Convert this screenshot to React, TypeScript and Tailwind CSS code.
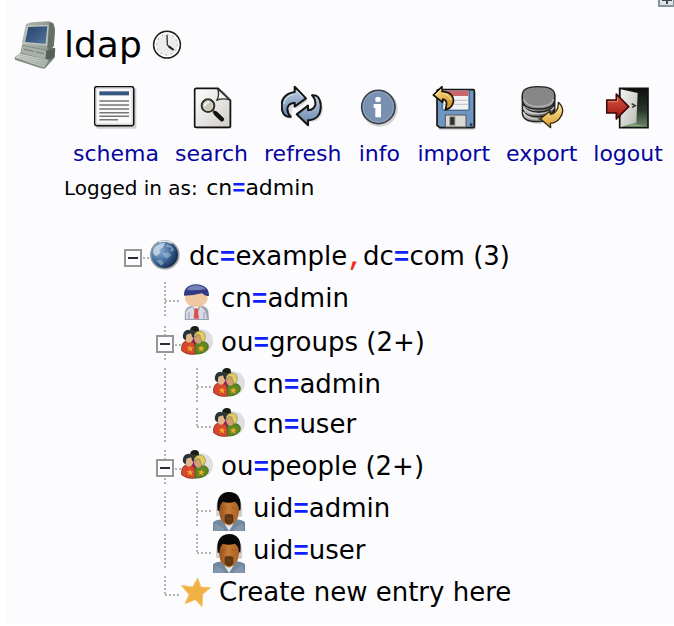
import React, { useState } from "react";

type IconProps = { className?: string };

function ComputerIcon() {
  return (
    <svg className="h-12 w-[42px] shrink-0" viewBox="39 66 126 144" aria-hidden="true">
      <defs>
        <linearGradient id="pcScreen" x1="0" y1="0" x2="1" y2="1">
          <stop offset="0" stopColor="#2a466a" />
          <stop offset="0.5" stopColor="#3a5a84" />
          <stop offset="1" stopColor="#58789e" />
        </linearGradient>
        <linearGradient id="pcBody" x1="0" y1="0" x2="1" y2="0">
          <stop offset="0" stopColor="#b4bab4" />
          <stop offset="1" stopColor="#8b938d" />
        </linearGradient>
        <linearGradient id="pcKeys" x1="0" y1="0" x2="1" y2="0">
          <stop offset="0" stopColor="#dcdfdb" />
          <stop offset="1" stopColor="#a9afa9" />
        </linearGradient>
      </defs>
      <path d="M64 136 L144 146 L163 148 L161 176 L131 209 L118 207 L42 182 L41 175 L58 163 Z" fill="#7c847e" />
      <path d="M75 76 L90 70 L144 67 L157 72 L162 90 L159 140 L150 154 L138 153 L66 138 L63 130 Z" fill="url(#pcBody)" />
      <path d="M145 70 L157 74 L162 92 L158 140 L149 153 L139 150 Z" fill="#666e68" />
      <path d="M79 80 L143 78 L138 140 L68 132 Z" fill="#c3c8c3" />
      <path d="M82 84 L139 82 L134 135 L72 129 Z" fill="url(#pcScreen)" />
      <path d="M64 140 L136 155 L133 179 L60 162 Z" fill="#a9b0aa" />
      <path d="M136 155 L162 146 L160 174 L133 190 Z" fill="#565e58" />
      <path d="M68 150 L98 157 M104 158 L129 164" stroke="#727a74" strokeWidth="3" />
      <path d="M42 176 L58 164 L144 182 L129 206 Z" fill="url(#pcKeys)" />
      <path d="M57 169 L137 187 M52 173 L133 194 M48 177 L129 199" stroke="#9fa6a0" strokeWidth="2" />
    </svg>
  );
}

function ClockIcon() {
  return (
    <svg className="h-[31px] w-[30px]" viewBox="456 87 90 93" aria-hidden="true">
      <circle cx="501" cy="131" r="40" fill="#eeeeee" stroke="#202020" strokeWidth="5" />
      <circle cx="501" cy="131" r="35" fill="#ececec" stroke="#ffffff" strokeWidth="4" />
      <circle cx="501" cy="131" r="31" fill="none" stroke="#aaaaaa" strokeWidth="4" strokeDasharray="3 13.23" />
      <path d="M501 102 L502 132 L520 146" fill="none" stroke="#333333" strokeWidth="4" />
      <path d="M506 136 L521 147" stroke="#222222" strokeWidth="6" />
    </svg>
  );
}

function SchemaIcon({ className }: IconProps) {
  return (
    <svg className={className} viewBox="102 30 132 132" aria-hidden="true">
      <rect x="108" y="36" width="121" height="122" rx="6" fill="#000000" opacity="0.18" />
      <rect x="104" y="32" width="117" height="117" rx="7" fill="#fafafa" stroke="#111111" strokeWidth="5" />
      <rect x="109" y="37" width="107" height="107" fill="none" stroke="#dddddd" strokeWidth="4" />
      <rect x="118" y="46" width="89" height="12" fill="#355681" />
      <path d="M118 75H207 M118 87H207 M118 99H207 M118 110H207 M118 121H207 M118 131H174" stroke="#777777" strokeWidth="4.5" />
    </svg>
  );
}

function SearchIcon({ className }: IconProps) {
  return (
    <svg className={className} viewBox="386 30 132 132" aria-hidden="true">
      <defs>
        <linearGradient id="paper" x1="0" y1="0" x2="1" y2="1">
          <stop offset="0" stopColor="#ffffff" />
          <stop offset="1" stopColor="#d0cdc9" />
        </linearGradient>
      </defs>
      <path d="M406 44 H486 L512 74 V158 H406 Z" fill="#000000" opacity="0.13" />
      <path d="M405 37 H470 L507 73 V149 Q507 154 502 154 H405 Q400 154 400 149 V42 Q400 37 405 37 Z" fill="url(#paper)" stroke="#111111" strokeWidth="5" />
      <path d="M469 38 Q475 56 467 72 Q487 65 505 72 Z" fill="#f5f5f3" stroke="#333333" strokeWidth="4" />
      <path d="M455 105 L463 112" stroke="#333333" strokeWidth="8" />
      <path d="M463 112 L482 130" stroke="#111111" strokeWidth="13" strokeLinecap="round" />
      <circle cx="440" cy="89" r="19" fill="#bcbca8" stroke="#303030" strokeWidth="6" />
      <circle cx="440" cy="89" r="14" fill="#c9c9b5" stroke="#deded0" strokeWidth="3" />
      <path d="M430 91 Q433 79 444 79" fill="none" stroke="#ffffff" strokeWidth="4" />
    </svg>
  );
}

function RefreshIcon({ className }: IconProps) {
  return (
    <svg className={className} viewBox="75 30 132 132" aria-hidden="true">
      <defs>
        <linearGradient id="steel" x1="0" y1="0" x2="0" y2="1">
          <stop offset="0" stopColor="#c3d2e4" />
          <stop offset="1" stopColor="#6584a9" />
        </linearGradient>
      </defs>
      <g fill="#000000" opacity="0.12" transform="translate(5 6)">
        <path d="M116 32 L151 68 L116 94 V79 Q99 83 103 122 Q82 125 77 102 Q70 55 116 48 Z" />
        <path d="M156 148 L121 115 L156 89 V104 Q177 96 168 58 Q193 54 196 91 Q196 130 156 133 Z" />
      </g>
      <path d="M116 32 L150 67 L116 92 V80 Q96 82 94 98 Q94 111 104 122 Q85 125 79 105 Q68 56 116 48 Z" fill="url(#steel)" stroke="#151515" strokeWidth="6" strokeLinejoin="round" />
      <path d="M156 148 L122 115 L156 89 V103 Q175 100 178 86 Q180 70 168 58 Q190 54 194 84 Q198 130 156 133 Z" fill="url(#steel)" stroke="#151515" strokeWidth="6" strokeLinejoin="round" />
      <path d="M121 44 L140 64 M113 55 Q87 60 84 84" fill="none" stroke="#dce7f2" strokeWidth="3" />
    </svg>
  );
}

function InfoIcon({ className }: IconProps) {
  return (
    <svg className={className} viewBox="306 30 132 132" aria-hidden="true">
      <circle cx="374" cy="98" r="54" fill="#000000" opacity="0.16" />
      <circle cx="370" cy="93" r="50" fill="#7a90b1" stroke="#3a3f47" strokeWidth="5" />
      <circle cx="370" cy="93" r="45" fill="none" stroke="#8b9ebb" strokeWidth="4" />
      <rect x="361" y="63" width="16" height="15" rx="5" fill="#ffffff" />
      <path d="M356 84 H378 V124 H361 V96 H356 Z" fill="#ffffff" />
    </svg>
  );
}

function ImportIcon({ className }: IconProps) {
  return (
    <svg className={className} viewBox="64 30 132 132" aria-hidden="true">
      <defs>
        <linearGradient id="goldUp" x1="0" y1="0" x2="1" y2="1">
          <stop offset="0" stopColor="#ffe58a" />
          <stop offset="1" stopColor="#c98a20" />
        </linearGradient>
      </defs>
      <rect x="83" y="46" width="113" height="116" rx="5" fill="#000000" opacity="0.14" />
      <path d="M84 41 H188 Q191 41 191 45 V151 Q191 155 187 155 H88 L79 148 V45 Q79 41 84 41 Z" fill="#6f96c2" stroke="#151515" strokeWidth="5" />
      <rect x="98" y="44" width="75" height="57" fill="#f2f2f2" />
      <rect x="98" y="44" width="75" height="16" fill="#c9686c" />
      <path d="M99 73 H172 M99 85 H172" stroke="#c8c8c8" strokeWidth="4" />
      <path d="M94 62 V98 Q94 103 100 103 H171 Q176 103 176 98 V44" fill="none" stroke="#41617e" strokeWidth="3" />
      <rect x="104" y="117" width="62" height="36" fill="#d9d9d5" stroke="#555555" strokeWidth="3" />
      <rect x="117" y="122" width="16" height="26" fill="#303030" stroke="#aaaaaa" strokeWidth="3" />
      <rect x="178" y="142" width="7" height="8" fill="#283746" />
      <path d="M94 32 L68 57 L96 79 V69 Q114 71 104 101 Q122 99 128 79 Q132 50 94 46 Z" fill="url(#goldUp)" stroke="#17120a" strokeWidth="5" strokeLinejoin="round" />
      <path d="M92 40 L75 57 M96 52 Q116 55 120 72" fill="none" stroke="#fff2a8" strokeWidth="3" />
    </svg>
  );
}

function ExportIcon({ className }: IconProps) {
  return (
    <svg className={className} viewBox="327 30 132 132" aria-hidden="true">
      <defs>
        <linearGradient id="disk" x1="0" y1="0" x2="1" y2="0">
          <stop offset="0" stopColor="#d0d0d0" />
          <stop offset="0.4" stopColor="#858585" />
          <stop offset="1" stopColor="#555555" />
        </linearGradient>
        <linearGradient id="goldDown" x1="0" y1="0" x2="0" y2="1">
          <stop offset="0" stopColor="#fff0aa" />
          <stop offset="1" stopColor="#db9b2c" />
        </linearGradient>
      </defs>
      <path d="M337 72 V122 Q353 148 391 143 Q431 138 435 114 V55 Z" fill="#000000" opacity="0.15" />
      <path d="M334 60 V113 Q337 137 377 137 Q431 138 431 112 V57 Z" fill="url(#disk)" stroke="#222222" strokeWidth="4" />
      <path d="M334 98 Q341 122 381 122 Q425 121 431 99 M334 83 Q342 108 382 108 Q425 107 431 82" fill="none" stroke="#222222" strokeWidth="4" />
      <path d="M337 91 Q349 114 385 113 Q419 111 429 93 M337 108 Q349 130 380 129" fill="none" stroke="#cecece" strokeWidth="4" />
      <path d="M334 57 Q334 32 382 32 Q431 32 431 57 V69 Q431 99 382 99 Q334 99 334 69 Z" fill="#878787" stroke="#222222" strokeWidth="4" />
      <path d="M337 69 Q347 92 382 92 Q420 92 428 70" fill="none" stroke="#b6b6b6" strokeWidth="4" />
      <path d="M442 79 Q466 101 446 127 Q437 140 418 142 L419 155 L388 128 L418 104 V115 Q443 111 442 79 Z" fill="url(#goldDown)" stroke="#332612" strokeWidth="4" strokeLinejoin="round" />
    </svg>
  );
}

function LogoutIcon({ className }: IconProps) {
  return (
    <svg className={className} viewBox="588 30 132 132" aria-hidden="true">
      <defs>
        <linearGradient id="hall" x1="0" y1="0" x2="0" y2="1">
          <stop offset="0" stopColor="#0c0f0c" />
          <stop offset="0.55" stopColor="#28342a" />
          <stop offset="1" stopColor="#6f8a68" />
        </linearGradient>
        <linearGradient id="door" x1="0" y1="0" x2="1" y2="1">
          <stop offset="0" stopColor="#f4f4f2" />
          <stop offset="1" stopColor="#b8bab4" />
        </linearGradient>
        <linearGradient id="redArrow" x1="0" y1="0" x2="0" y2="1">
          <stop offset="0" stopColor="#dd5543" />
          <stop offset="1" stopColor="#9c1610" />
        </linearGradient>
      </defs>
      <rect x="629" y="37" width="85" height="118" fill="url(#hall)" stroke="#111111" strokeWidth="5" />
      <path d="M673 144 L707 151 H645 Z" fill="#86a77a" />
      <path d="M632 40 L683 51 L679 140 L632 153 Z" fill="url(#door)" />
      <path d="M665 83 L676 89 L666 94" fill="none" stroke="#272c28" strokeWidth="4" />
      <path d="M590 72 H619 V54 L656 92 L619 129 V111 H590 Z" fill="url(#redArrow)" stroke="#3a0905" strokeWidth="5" strokeLinejoin="round" />
      <path d="M594 77 H623 V65" fill="none" stroke="#e8806c" strokeWidth="3" />
    </svg>
  );
}

function GlobeIcon() {
  return (
    <svg className="h-8 w-8" viewBox="117 30 96 96" aria-hidden="true">
      <defs>
        <radialGradient id="globe" cx="0.3" cy="0.35" r="0.75">
          <stop offset="0" stopColor="#8fb2d4" />
          <stop offset="0.45" stopColor="#4d78a8" />
          <stop offset="0.8" stopColor="#213f6c" />
          <stop offset="1" stopColor="#172743" />
        </radialGradient>
      </defs>
      <circle cx="166" cy="76" r="44" fill="#8d8d8d" opacity="0.35" />
      <circle cx="164" cy="74" r="42" fill="url(#globe)" stroke="#9b9ea0" strokeWidth="4" />
      <path d="M136 49 Q151 36 166 39 L160 51 L147 60 L151 68 L139 79 Q127 73 129 61 Z" fill="#d5e5ee" opacity="0.7" />
      <path d="M172 42 Q188 48 193 61 L181 66 L184 54 L168 50 Z M157 69 L175 67 L184 76 L170 86 L161 79 Z M139 92 L152 89 L162 98 L154 107 Z" fill="#b4cbd9" opacity="0.5" />
      <path d="M147 37 Q166 29 186 40" fill="none" stroke="#dfe4e6" strokeWidth="5" />
    </svg>
  );
}

function PersonIcon() {
  return (
    <svg className="h-[39px] w-8" viewBox="213 153 96 117" aria-hidden="true">
      <path d="M224 267 L225 240 Q230 226 250 223 H270 Q290 226 295 240 L297 267 Z" fill="#9da0ae" />
      <path d="M228 264 V241 Q235 230 249 227 L258 260 L271 227 Q287 231 291 264 Z" fill="#d9dae6" />
      <path d="M250 225 L258 240 L268 225 L263 217 H254 Z" fill="#ffffff" />
      <path d="M254 232 H263 L267 263 H251 Z" fill="#dd5052" />
      <path d="M237 244 V266 M282 244 V266" stroke="#a4a8c4" strokeWidth="4" />
      <ellipse cx="259" cy="202" rx="34" ry="26" fill="#efc8a2" />
      <path d="M222 194 Q221 162 258 160 Q297 162 297 194 Q287 197 276 187 Q250 194 222 194 Z" fill="#303a85" />
      <path d="M230 177 Q237 163 259 163 Q278 164 287 175 Q257 179 230 177 Z" fill="#7780b2" />
    </svg>
  );
}

function GroupIcon() {
  return (
    <svg className="h-8 w-8" viewBox="213 288 96 96" aria-hidden="true">
      <ellipse cx="275" cy="334" rx="34" ry="36" fill="#aaaaaa" opacity="0.35" />
      <path d="M241 318 H277 V362 H241 Z" fill="#8d1b65" />
      <circle cx="254" cy="301" r="13" fill="#3c3a2c" />
      <path d="M240 299 Q246 285 264 290 L269 307 L257 303 Z" fill="#171e15" />
      <path d="M215 362 Q213 336 229 334 L247 336 Q260 343 257 372 Q232 376 215 362 Z" fill="#d6492f" stroke="#9c3624" strokeWidth="3" />
      <path d="M256 372 L256 341 Q266 333 285 336 Q299 342 293 358 Q280 373 256 372 Z" fill="#5f8920" stroke="#456a19" strokeWidth="3" />
      <ellipse cx="237" cy="322" rx="13" ry="16" fill="#e0b68b" />
      <path d="M219 324 Q216 301 235 299 Q254 301 253 322 L247 322 L243 310 L229 314 L227 332 Z" fill="#27323b" />
      <ellipse cx="265" cy="325" rx="13" ry="16" fill="#cfa274" />
      <path d="M254 319 Q252 305 270 303 Q287 305 286 323 L280 337 L273 330 L269 315 L260 314 L256 324 Z" fill="#e2cb62" stroke="#8a7b45" strokeWidth="2" />
      <path d="M240 345 L243 352 L250 353 L245 357 L247 365 L240 360 L234 364 L236 356 L230 352 L238 351 Z M274 346 L277 352 L284 353 L278 358 L280 365 L273 361 L267 364 L269 357 L264 352 L271 352 Z" fill="#f2a632" />
    </svg>
  );
}

function UserIcon() {
  return (
    <svg className="h-[39px] w-8" viewBox="216 36 96 117" aria-hidden="true">
      <defs>
        <linearGradient id="skin" x1="0" y1="0" x2="1" y2="0">
          <stop offset="0" stopColor="#8e4d1a" />
          <stop offset="0.45" stopColor="#c87b34" />
          <stop offset="1" stopColor="#a66126" />
        </linearGradient>
      </defs>
      <path d="M226 108 Q221 38 264 36 Q308 38 303 110 Z" fill="#999999" opacity="0.45" />
      <path d="M216 153 V127 Q223 120 243 118 H287 Q307 121 312 127 V153 Z" fill="#72889f" />
      <path d="M224 130 L250 146 L248 153 H218 Z M304 130 L278 146 L280 153 H310 Z" fill="#8297ac" />
      <path d="M251 132 L264 153 L277 132 Z" fill="#e7e9e9" />
      <path d="M233 86 Q236 60 264 59 Q292 60 296 86 L290 114 Q282 132 264 137 Q246 132 238 114 Z" fill="url(#skin)" />
      <path d="M230 92 Q223 38 264 36 Q305 37 298 92 L294 90 Q293 70 281 65 Q263 71 246 65 Q236 72 235 92 Z" fill="#080807" />
      <path d="M251 124 V108 Q251 102 264 102 Q277 102 277 108 V124 Q272 133 264 133 Q256 133 251 124 Z" fill="#4a2a10" opacity="0.85" />
      <path d="M257 112 H271 V121 H257 Z" fill="#6f3e18" />
      <path d="M244 84 H256 M272 84 H284" stroke="#9a5a24" strokeWidth="3" />
    </svg>
  );
}

function StarIcon() {
  return (
    <svg className="h-8 w-8" viewBox="120 288 96 96" aria-hidden="true">
      <path d="M170 294 L180 321 L208 323 L185 343 L183 380 L163 359 L132 371 L144 344 L121 316 L155 321 Z" fill="#f2b243" stroke="#f5c470" strokeWidth="3" strokeLinejoin="round" />
    </svg>
  );
}

type LineKind = "blank" | "bar" | "tee" | "corner";

/* One 32px column of the dotted guide lines. */
function Guide({ kind }: { kind: LineKind }) {
  return (
    <svg className="h-9 w-8 shrink-0" viewBox="0 0 32 36" aria-hidden="true">
      <g stroke="#b4b4b4" strokeWidth="2" strokeDasharray="2 2">
        {(kind === "bar" || kind === "tee") && <path d="M16 0V35" />}
        {kind === "corner" && <path d="M16 0V18" />}
        {(kind === "tee" || kind === "corner") && <path d="M16 19H32" />}
      </g>
    </svg>
  );
}

function Toggle({ root, open, label, onClick }: { root?: boolean; open: boolean; label: string; onClick: () => void }) {
  return (
    <button type="button" onClick={onClick} aria-expanded={open} aria-label={label} className="h-9 w-8 shrink-0">
      <svg className="h-9 w-8" viewBox="0 0 32 36" aria-hidden="true">
        <path d={root ? "M26 18H32" : "M16 0V35 M26 19H32"} stroke="#b4b4b4" strokeWidth="2" strokeDasharray="2 2" />
        <rect x="8" y="10" width="16" height="16" fill="#fcfcfe" stroke="#969696" strokeWidth="2" />
        <path d={open ? "M11 18H21" : "M11 18H21 M16 13V23"} stroke="#2b2b33" strokeWidth="2" />
      </svg>
    </button>
  );
}

/* Distinguished name with coloured separators. */
function Dn({ text }: { text: string }) {
  return (
    <>
      {text.split(/([=,])/).map((part, i) =>
        part === "=" ? (
          <span key={i} className="font-['Liberation_Mono',monospace] font-bold text-[#0f1fff]">=</span>
        ) : part === "," ? (
          <span key={i} className="font-['Liberation_Mono',monospace] font-bold text-[#f32c1e]">,</span>
        ) : (
          part
        )
      )}
    </>
  );
}

type Row = {
  dn: string;
  count?: string;
  guides: LineKind[];
  toggle?: "root" | "groups" | "people";
  icon: () => React.JSX.Element;
  height: string;
  parent?: "groups" | "people";
};

const rows: Row[] = [
  { dn: "dc=example,dc=com", count: "(3)", guides: [], toggle: "root", icon: GlobeIcon, height: "h-[42px]" },
  { dn: "cn=admin", guides: ["blank", "tee"], icon: PersonIcon, height: "h-11" },
  { dn: "ou=groups", count: "(2+)", guides: ["blank"], toggle: "groups", icon: GroupIcon, height: "h-[42px]" },
  { dn: "cn=admin", guides: ["blank", "bar", "tee"], icon: GroupIcon, height: "h-10", parent: "groups" },
  { dn: "cn=user", guides: ["blank", "bar", "corner"], icon: GroupIcon, height: "h-[42px]", parent: "groups" },
  { dn: "ou=people", count: "(2+)", guides: ["blank"], toggle: "people", icon: GroupIcon, height: "h-[42px]" },
  { dn: "uid=admin", guides: ["blank", "bar", "tee"], icon: UserIcon, height: "h-[42px]", parent: "people" },
  { dn: "uid=user", guides: ["blank", "bar", "corner"], icon: UserIcon, height: "h-[42px]", parent: "people" },
];

const actions = [
  { label: "schema", Icon: SchemaIcon },
  { label: "search", Icon: SearchIcon },
  { label: "refresh", Icon: RefreshIcon },
  { label: "info", Icon: InfoIcon },
  { label: "import", Icon: ImportIcon },
  { label: "export", Icon: ExportIcon },
  { label: "logout", Icon: LogoutIcon },
];

export default function App() {
  const [closed, setClosed] = useState<Record<string, boolean>>({});
  const flip = (key: string) => setClosed((c) => ({ ...c, [key]: !c[key] }));
  const visible = rows.filter((r) => r.toggle === "root" || (!closed.root && !(r.parent && closed[r.parent])));

  return (
    <div className="overflow-hidden bg-white pl-1.5 font-['DejaVu_Sans',Verdana,sans-serif] text-black">
      <main className="relative bg-[#fcfcfe] pt-5 pb-1.5">
        <button type="button" aria-label="Expand all" className="absolute top-[-9px] right-0 h-4 w-4">
          <svg className="h-4 w-4" viewBox="0 0 16 16" aria-hidden="true">
            <rect x="1" y="1" width="15" height="14" fill="#dfe5e6" stroke="#87939a" strokeWidth="2" />
            <path d="M9 3V13 M4 9H14" stroke="#3f464b" strokeWidth="2" />
          </svg>
        </button>

        <header className="flex h-[50px] items-center pl-2">
          <ComputerIcon />
          <h1 className="ml-2 text-4xl">ldap</h1>
          <a href="#" aria-label="Recent activity" className="ml-2.5">
            <ClockIcon />
          </a>
        </header>

        <nav className="flex gap-4 pt-4 pl-[67px] text-[22px] leading-7 text-[#0505a0]">
          {actions.map(({ label, Icon }) => (
            <a key={label} href="#" className="flex flex-col items-center gap-2.5">
              <Icon className="h-11 w-11" />
              {label}
            </a>
          ))}
        </nav>

        <p className="pl-[58px] text-xl leading-10">
          Logged in as:{" "}
          <span className="ml-0.5 text-[22px]">
            <Dn text="cn=admin" />
          </span>
        </p>

        <ul className="pt-[30px] pl-[111px] text-[26px] leading-8">
          {visible.map((row, i) => {
            const Icon = row.icon;
            return (
              <li key={i} className={`flex items-start whitespace-nowrap ${row.height}`}>
                {row.guides.map((kind, g) => (
                  <Guide key={g} kind={kind} />
                ))}
                {row.toggle && (
                  <Toggle
                    root={row.toggle === "root"}
                    open={!closed[row.toggle]}
                    label={`Toggle ${row.dn}`}
                    onClick={() => flip(row.toggle!)}
                  />
                )}
                <span className="shrink-0">
                  <Icon />
                </span>
                <a href="#" className="ml-2">
                  <Dn text={row.dn} />
                  {row.count && ` ${row.count}`}
                </a>
              </li>
            );
          })}
          {!closed.root && (
            <li className="flex h-[42px] items-start whitespace-nowrap">
              <Guide kind="blank" />
              <Guide kind="corner" />
              <StarIcon />
              <a href="#" className="ml-1.5">
                Create new entry here
              </a>
            </li>
          )}
        </ul>
      </main>
    </div>
  );
}
